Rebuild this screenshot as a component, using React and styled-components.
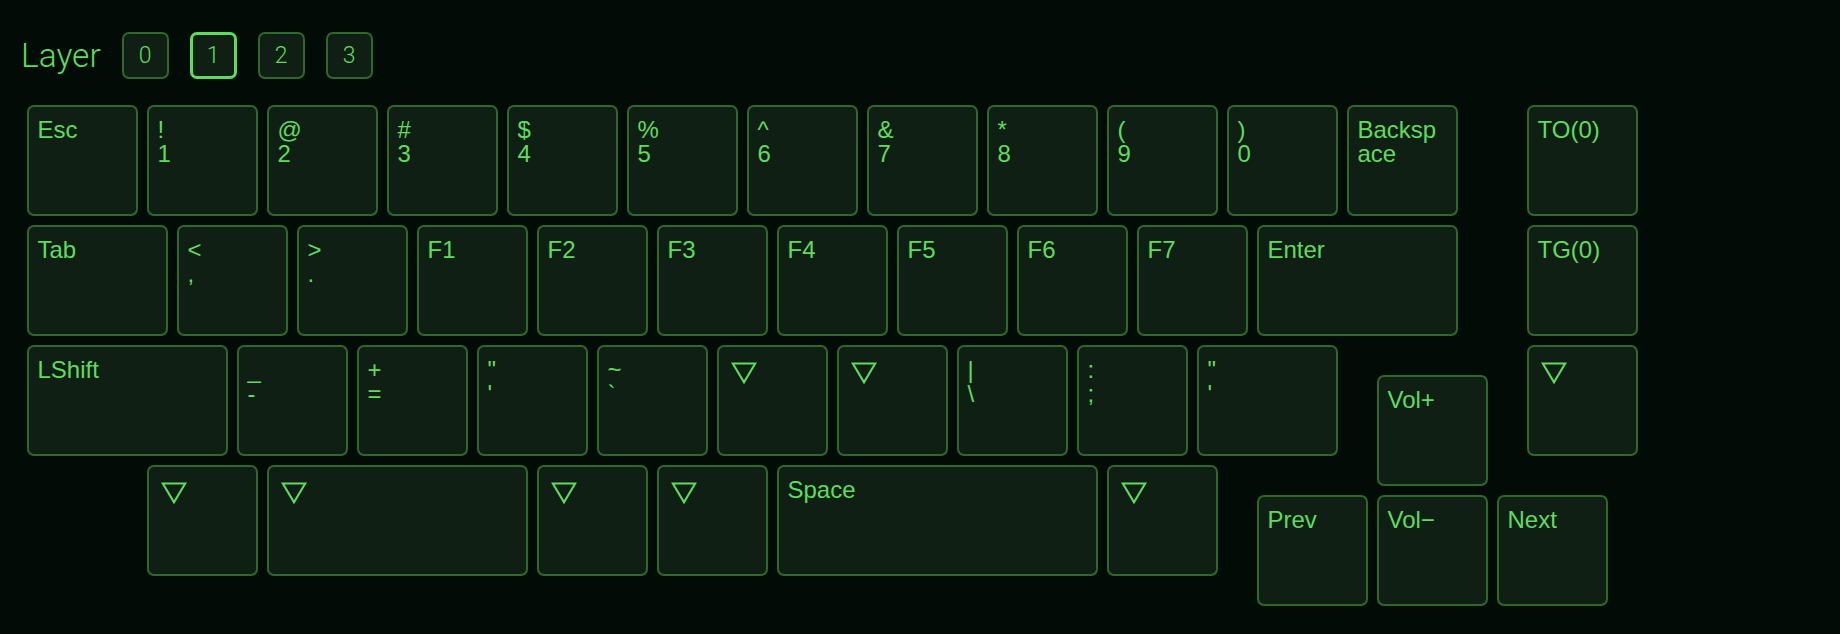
import React from "react";
import styled, { createGlobalStyle } from "styled-components";

const GREEN = "#5fdc5f";
const BORDER = "#2f682d";
const FILL = "#0f1f13";
const BG = "#020c06";

const Global = createGlobalStyle`
  html, body {
    margin: 0;
    padding: 0;
    background: ${BG};
  }
  body {
    font-family: "Liberation Sans", Arial, sans-serif;
  }
`;

const Page = styled.div`
  width: 1840px;
  height: 634px;
  box-sizing: border-box;
  padding: 32px 22px 0 22px;
  background: ${BG};
  display: flex;
  flex-direction: column;
  gap: 21px;
`;

const LayerBar = styled.div`
  display: flex;
  align-items: center;
  gap: 21px;
  height: 47px;
`;

const LayerLabel = styled.span`
  font-family: Roboto, "Liberation Sans", sans-serif;
  font-weight: 300;
  font-size: 33.5px;
  color: ${GREEN};
  margin-left: -1px;
  line-height: 47px;
`;

const LayerButton = styled.button`
  box-sizing: border-box;
  width: 47px;
  height: 47px;
  padding: 0;
  border-radius: 7px;
  background: ${FILL};
  border: ${(p) => (p.$active ? `3px solid ${GREEN}` : `2px solid ${BORDER}`)};
  color: ${GREEN};
  font-family: Roboto, "Liberation Sans", sans-serif;
  font-weight: 300;
  font-size: 23px;
  display: flex;
  align-items: center;
  justify-content: center;
  cursor: pointer;
`;

const Board = styled.div`
  display: grid;
  grid-template-columns: repeat(54, 30px);
  grid-template-rows: repeat(17, 30px);
`;

const Key = styled.div`
  grid-column: ${(p) => p.$col + 1} / span ${(p) => p.$w};
  grid-row: ${(p) => p.$row + 1} / span 4;
  margin: 4.5px;
  box-sizing: border-box;
  background: ${FILL};
  border: 2px solid ${BORDER};
  border-radius: 7px;
  padding: 11px 12px 0 9px;
  color: ${GREEN};
  font-size: 24px;
  line-height: 24px;
  word-break: break-all;
  overflow: hidden;
`;

const Line = styled.div`
  white-space: pre-wrap;
`;

const Tri = styled.svg`
  display: block;
  width: 26px;
  height: 22px;
  margin: 4px 0 0 3.5px;
`;

const Transparent = () => (
  <Tri viewBox="0 0 26 22">
    <path
      d="M1.8 1.5 H24.2 L13 20.3 Z"
      fill="none"
      stroke={GREEN}
      strokeWidth="2.1"
      strokeLinejoin="miter"
    />
  </Tri>
);

const T = "▽";

// col/row in quarter units, w in quarter units
const keys = [
  // row 0
  { c: 0, r: 0, w: 4, l: ["Esc"] },
  { c: 4, r: 0, w: 4, l: ["!", "1"] },
  { c: 8, r: 0, w: 4, l: ["@", "2"] },
  { c: 12, r: 0, w: 4, l: ["#", "3"] },
  { c: 16, r: 0, w: 4, l: ["$", "4"] },
  { c: 20, r: 0, w: 4, l: ["%", "5"] },
  { c: 24, r: 0, w: 4, l: ["^", "6"] },
  { c: 28, r: 0, w: 4, l: ["&", "7"] },
  { c: 32, r: 0, w: 4, l: ["*", "8"] },
  { c: 36, r: 0, w: 4, l: ["(", "9"] },
  { c: 40, r: 0, w: 4, l: [")", "0"] },
  { c: 44, r: 0, w: 4, l: ["Backspace"] },
  { c: 50, r: 0, w: 4, l: ["TO(0)"] },
  // row 1
  { c: 0, r: 4, w: 5, l: ["Tab"] },
  { c: 5, r: 4, w: 4, l: ["<", ","] },
  { c: 9, r: 4, w: 4, l: [">", "."] },
  { c: 13, r: 4, w: 4, l: ["F1"] },
  { c: 17, r: 4, w: 4, l: ["F2"] },
  { c: 21, r: 4, w: 4, l: ["F3"] },
  { c: 25, r: 4, w: 4, l: ["F4"] },
  { c: 29, r: 4, w: 4, l: ["F5"] },
  { c: 33, r: 4, w: 4, l: ["F6"] },
  { c: 37, r: 4, w: 4, l: ["F7"] },
  { c: 41, r: 4, w: 7, l: ["Enter"] },
  { c: 50, r: 4, w: 4, l: ["TG(0)"] },
  // row 2
  { c: 0, r: 8, w: 7, l: ["LShift"] },
  { c: 7, r: 8, w: 4, l: ["_", "-"] },
  { c: 11, r: 8, w: 4, l: ["+", "="] },
  { c: 15, r: 8, w: 4, l: ['"', "'"] },
  { c: 19, r: 8, w: 4, l: ["~", "`"] },
  { c: 23, r: 8, w: 4, l: T },
  { c: 27, r: 8, w: 4, l: T },
  { c: 31, r: 8, w: 4, l: ["|", "\\"] },
  { c: 35, r: 8, w: 4, l: [":", ";"] },
  { c: 39, r: 8, w: 5, l: ['"', "'"] },
  { c: 45, r: 9, w: 4, l: ["Vol+"] },
  { c: 50, r: 8, w: 4, l: T },
  // row 3
  { c: 4, r: 12, w: 4, l: T },
  { c: 8, r: 12, w: 9, l: T },
  { c: 17, r: 12, w: 4, l: T },
  { c: 21, r: 12, w: 4, l: T },
  { c: 25, r: 12, w: 11, l: ["Space"] },
  { c: 36, r: 12, w: 4, l: T },
  { c: 41, r: 13, w: 4, l: ["Prev"] },
  { c: 45, r: 13, w: 4, l: ["Vol\u2212"] },
  { c: 49, r: 13, w: 4, l: ["Next"] },
];

export default function App() {
  const [layer, setLayer] = React.useState(1);
  return (
    <>
      <Global />
      <Page>
        <LayerBar>
          <LayerLabel>Layer</LayerLabel>
          {[0, 1, 2, 3].map((n) => (
            <LayerButton key={n} $active={layer === n} onClick={() => setLayer(n)}>
              {n}
            </LayerButton>
          ))}
        </LayerBar>
        <Board>
          {keys.map((k, i) => (
            <Key key={i} $col={k.c} $row={k.r} $w={k.w}>
              {k.l === T ? (
                <Transparent />
              ) : (
                k.l.map((t, j) => <Line key={j}>{t}</Line>)
              )}
            </Key>
          ))}
        </Board>
      </Page>
    </>
  );
}
